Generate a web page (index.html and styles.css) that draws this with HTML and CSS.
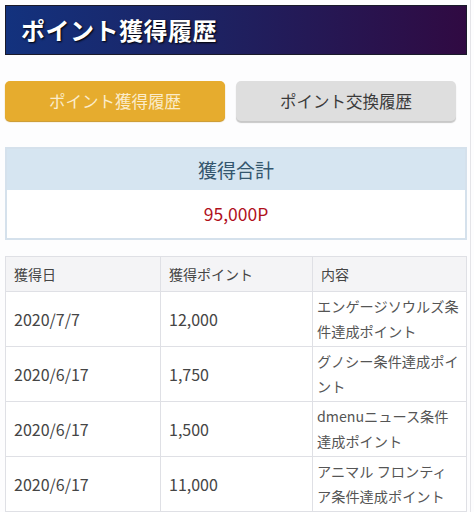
FILE: index.html
```html
<!DOCTYPE html>
<html lang="ja">
<head>
<meta charset="utf-8">
<link rel="stylesheet" href="styles.css">
</head>
<body>
<div class="page">
  <h1 class="title">ポイント獲得履歴</h1>
  <div class="tabs">
    <div class="tab tab-active">ポイント獲得履歴</div>
    <div class="tab tab-gray">ポイント交換履歴</div>
  </div>
  <div class="summary">
    <div class="summary-head">獲得合計</div>
    <div class="summary-body">95,000P</div>
  </div>
  <table class="history">
    <thead>
      <tr><th>獲得日</th><th>獲得ポイント</th><th>内容</th></tr>
    </thead>
    <tbody>
      <tr><td>2020/7/7</td><td>12,000</td><td class="desc">エンゲージソウルズ条<br>件達成ポイント</td></tr>
      <tr><td>2020/6/17</td><td>1,750</td><td class="desc">グノシー条件達成ポイ<br>ント</td></tr>
      <tr><td>2020/6/17</td><td>1,500</td><td class="desc">dmenuニュース条件<br>達成ポイント</td></tr>
      <tr><td>2020/6/17</td><td>11,000</td><td class="desc">アニマル フロンティ<br>ア条件達成ポイント</td></tr>
    </tbody>
  </table>
</div>
</body>
</html>
```
FILE: styles.css
```css
html, body {
  margin: 0;
  padding: 0;
  background: #fdfdfe;
}
body {
  font-family: "Noto Sans CJK JP", "Noto Sans", sans-serif;
  color: #444;
}
.page {
  width: 462px;
  padding: 5px 3px 0 5px;
  border-right: 1px solid #e4e4e8;
}
.title {
  margin: 0;
  height: 48px;
  line-height: 48px;
  border: 1px solid #1a1a2a;
  background: linear-gradient(to right, #13327e 0%, #1d2262 45%, #300a42 100%);
  color: #fff;
  font-size: 24px;
  font-weight: bold;
  padding-left: 15px;
  text-shadow: 1px 1px 2px #000;
  letter-spacing: 0.5px;
}
.tabs {
  display: flex;
  gap: 11px;
  margin-top: 26px;
}
.tab {
  width: 220px;
  height: 40px;
  line-height: 40px;
  text-align: center;
  border-radius: 5px;
  font-size: 16.5px;
}
.tab-active {
  background: #e6ac2e;
  color: #fbeccb;
  box-shadow: 0 1px 1px #c99423;
}
.tab-gray {
  background: #dedede;
  color: #3a3a3a;
  box-shadow: 0 2px 1px #c8c8c8;
}
.summary {
  margin-top: 26px;
  border: 2px solid #d5e1ec;
}
.summary-head {
  background: #d6e5f1;
  height: 41px;
  line-height: 41px;
  text-align: center;
  font-size: 19px;
  color: #34566e;
}
.summary-body {
  background: #fff;
  height: 48px;
  line-height: 48px;
  text-align: center;
  font-size: 17.5px;
  color: #b0101c;
}
.history {
  margin-top: 16px;
  width: 462px;
  border-collapse: collapse;
  table-layout: fixed;
  font-size: 16px;
}
.history th, .history td {
  border: 1px solid #dfe0e5;
  text-align: left;
  padding: 0 8px;
  color: #454545;
}
.history th {
  background: #f4f4f6;
  height: 34px;
  font-weight: normal;
  font-size: 14px;
}
.history th:nth-child(1), .history td:nth-child(1) { width: 138px; }
.history th:nth-child(2), .history td:nth-child(2) { width: 135px; }
.history td {
  background: #fff;
  height: 54px;
}
.history td.desc {
  font-size: 14.2px;
  line-height: 25px;
  padding: 0 0 0 4px;
  white-space: nowrap;
  color: #555;
}
```
